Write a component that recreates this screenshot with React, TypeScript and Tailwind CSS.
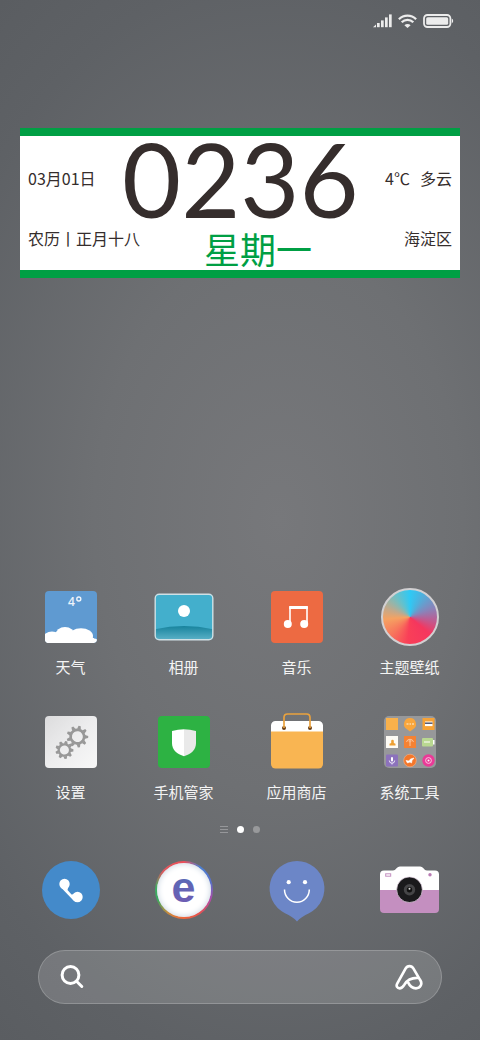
import type { ReactNode } from "react";

type AppItem = {
  name: string;
  icon: ReactNode;
};

/* ---------- status bar ---------- */

function SignalIcon() {
  return (
    <svg width="19" height="14" viewBox="0 0 19 14" fill="#ececec">
      <path d="M0 13.2 3 10.4v2.8z" />
      <rect x="4" y="9" width="2.7" height="4.2" />
      <rect x="8" y="6.4" width="2.7" height="6.8" />
      <rect x="12" y="3.4" width="2.7" height="9.8" />
      <rect x="16" y="0.4" width="2.7" height="12.8" />
    </svg>
  );
}

function WifiIcon() {
  return (
    <svg width="19" height="14" viewBox="0 0 19 14" fill="none" stroke="#ececec" strokeWidth="2.3">
      <path d="M0.9 5.2a12.2 12.2 0 0 1 17.2 0" />
      <path d="M3.7 8.3a8.2 8.2 0 0 1 11.6 0" />
      <path d="M6.4 11.2a4.4 4.4 0 0 1 6.2 0L9.5 14z" fill="#ececec" stroke="none" />
    </svg>
  );
}

function BatteryIcon() {
  return (
    <svg width="31" height="14" viewBox="0 0 31 14">
      <rect x="1" y="1" width="26.4" height="12" rx="3.4" fill="none" stroke="#ececec" strokeWidth="1.8" />
      <rect x="3.2" y="3.2" width="22" height="7.6" rx="1.6" fill="#ececec" />
      <path d="M28.8 4.8c1.8.4 1.8 4 0 4.4z" fill="#ececec" />
    </svg>
  );
}

/* ---------- app icons ---------- */

function WeatherIcon() {
  return (
    <svg width="52" height="52" viewBox="0 0 52 52">
      <defs>
        <clipPath id="weather-clip">
          <rect width="52" height="52" rx="4" />
        </clipPath>
      </defs>
      <g clipPath="url(#weather-clip)">
        <rect width="52" height="52" fill="#5f9ad1" />
        <g fill="#fff">
          <ellipse cx="7" cy="47" rx="9" ry="6.5" />
          <ellipse cx="20" cy="44" rx="9.5" ry="8" />
          <ellipse cx="36" cy="45" rx="12" ry="7.8" />
          <ellipse cx="41" cy="48" rx="7" ry="6" />
          <ellipse cx="49" cy="51" rx="4" ry="3.5" />
          <rect y="47" width="49" height="5" />
        </g>
        <text
          x="23"
          y="14.5"
          fontSize="12"
          fontWeight="500"
          fill="#eef5fc"
          className="font-['Noto_Sans',sans-serif]"
        >
          4
        </text>
        <circle cx="33.8" cy="8" r="2" fill="none" stroke="#eef5fc" strokeWidth="1.4" />
      </g>
    </svg>
  );
}

function GalleryIcon() {
  return (
    <svg width="60" height="48" viewBox="0 0 60 48">
      <defs>
        <linearGradient id="sea" x1="0" y1="0" x2="0" y2="1">
          <stop offset="0" stopColor="#17839d" />
          <stop offset="1" stopColor="#61b5cb" />
        </linearGradient>
        <clipPath id="gallery-clip">
          <rect x="1" y="1" width="58" height="46" rx="4" />
        </clipPath>
      </defs>
      <g clipPath="url(#gallery-clip)">
        <rect width="60" height="48" fill="#43afcc" />
        <path d="M0 36.5Q30 29.5 60 36.5V48H0z" fill="url(#sea)" />
      </g>
      <rect x="1.2" y="1.2" width="57.6" height="45.6" rx="4" fill="none" stroke="#cfe0e5" strokeWidth="1.4" />
      <circle cx="30" cy="18" r="6" fill="#fff" />
    </svg>
  );
}

function MusicIcon() {
  return (
    <svg width="52" height="52" viewBox="0 0 52 52">
      <rect width="52" height="52" rx="4" fill="#ed6a42" />
      <path d="M19 33V16.2h17V33" fill="none" stroke="#fff" strokeWidth="1.6" />
      <rect x="18.2" y="15" width="18.6" height="3" fill="#fff" />
      <circle cx="16.8" cy="33" r="4" fill="#fff" />
      <circle cx="33.2" cy="33" r="4" fill="#fff" />
    </svg>
  );
}

function ThemeIcon() {
  return (
    <div className="size-[58px] rounded-full border-2 border-[#d2d0d2] bg-[conic-gradient(#2fc9f5_0deg,#4fb0dc_30deg,#8b82b8_70deg,#c05a90_100deg,#f5365e_130deg,#f93f58_185deg,#f7745c_225deg,#f5a262_265deg,#c4a98a_290deg,#6fbfc4_325deg,#2fc9f5_360deg)]" />
  );
}

function Gear({ cx, cy, r }: { cx: number; cy: number; r: number }) {
  const teeth = [0, 40, 80, 120, 160, 200, 240, 280, 320];

  return (
    <g transform={`translate(${cx} ${cy}) rotate(12)`}>
      {teeth.map((deg) => (
        <path
          key={deg}
          d={`M-1.9 ${-r * 0.7}L-1.1 ${-r}H1.1L1.9 ${-r * 0.7}z`}
          transform={`rotate(${deg})`}
          fill="#989898"
        />
      ))}
      <circle r={r * 0.63} fill="none" stroke="#989898" strokeWidth={r * 0.25} />
    </g>
  );
}

function SettingsIcon() {
  return (
    <svg width="52" height="52" viewBox="0 0 52 52">
      <defs>
        <linearGradient id="plate" x1="0" y1="0" x2="1" y2="1">
          <stop offset="0" stopColor="#dcdcdd" />
          <stop offset="0.5" stopColor="#ededee" />
          <stop offset="1" stopColor="#f8f8f8" />
        </linearGradient>
      </defs>
      <rect width="52" height="52" rx="4" fill="url(#plate)" />
      <Gear cx={32.4} cy={20.6} r={10.8} />
      <Gear cx={19.4} cy={34} r={9} />
    </svg>
  );
}

function SecurityIcon() {
  return (
    <svg width="52" height="52" viewBox="0 0 52 52">
      <rect width="52" height="52" rx="4" fill="#2db243" />
      <path d="M26 13.2C22 13.4 18 14 14 15V27c0 7.4 5 11 12 13.2z" fill="#fff" />
      <path d="M26 13.2c4 .2 8 .8 12 1.8V27c0 7.4-5 11-12 13.2z" fill="#e9e9e9" />
    </svg>
  );
}

function StoreIcon() {
  return (
    <svg width="52" height="58" viewBox="0 0 52 58">
      <path d="M0 20V12.5a4.5 4.5 0 0 1 4.5-4.5h43a4.5 4.5 0 0 1 4.5 4.5V20z" fill="#fff" />
      <path d="M0 18.5h52V51a4.5 4.5 0 0 1-4.5 4.5h-43A4.5 4.5 0 0 1 0 51z" fill="#f9b552" />
      <circle cx="13" cy="15" r="2" fill="#6b3f16" />
      <circle cx="39" cy="15" r="2" fill="#6b3f16" />
      <path d="M13 15V4.5Q13 1 16.5 1h19Q39 1 39 4.5V15" fill="none" stroke="#e9a23e" strokeWidth="1.7" />
    </svg>
  );
}

function ToolsIcon() {
  return (
    <svg width="52" height="52" viewBox="0 0 52 52">
      <rect width="52" height="52" rx="5" fill="#97989a" />
      <rect x="2" y="2" width="12" height="12" fill="#f9b14b" />
      <path d="M26 2a6 6 0 0 1 3 11.2L26 15.5l-3-2.3A6 6 0 0 1 26 2z" fill="#f9a63c" />
      <path d="M22.5 8h2m1 0h1.5m1 0h2" stroke="#fbd9a6" strokeWidth="1.4" />
      <rect x="38.5" y="2" width="12" height="12" fill="#f6a236" />
      <rect x="41" y="5.5" width="7.5" height="4.6" fill="#fff" />
      <rect x="41" y="6.5" width="7.5" height="1.4" fill="#4b4c63" />

      <rect x="2" y="20" width="12" height="12" fill="#fdfbf5" />
      <path d="M5.5 29.5v-1.7l1.7-.8V25a1.3 1.3 0 0 1 2.6 0v2l1.7.8v1.7z" fill="#eda034" />
      <rect x="20" y="20" width="12" height="12" fill="#f58233" />
      <g fill="none" stroke="#fbc399" strokeWidth="1">
        <path d="M22.5 26a3.6 3.6 0 0 1 7 0" />
        <path d="M26 25.5V30" />
        <circle cx="26" cy="25" r="1" />
      </g>
      <rect x="38" y="22" width="11" height="8.5" rx="1" fill="#b9d891" />
      <path d="M49 24h1.5v4.5H49z" fill="#fff" />
      <rect x="40" y="25" width="6" height="2" fill="#dcebc7" />

      <rect x="2" y="38.5" width="12" height="12" rx="1" fill="#8c72bc" />
      <rect x="7" y="41" width="2" height="4.5" rx="1" fill="#fff" />
      <path d="M5.3 44.5a2.7 2.7 0 0 0 5.4 0M8 47v1.5" fill="none" stroke="#e9e2f6" strokeWidth="1" />
      <circle cx="26" cy="44.5" r="6.3" fill="#f4772b" stroke="#f7b488" strokeWidth="0.6" />
      <path d="M22 44.5l3 .5 1.5-2 3.5-1-2 2.5-.5 2.5-1.5-1-2.5 1z" fill="#fff" stroke="#fff" strokeWidth="0.6" />
      <circle cx="44.5" cy="44.5" r="6.2" fill="#ea3a97" />
      <circle cx="44.5" cy="44.5" r="2.9" fill="none" stroke="#fbd0e6" strokeWidth="0.9" />
      <circle cx="44.5" cy="44.5" r="1" fill="#fff" />
    </svg>
  );
}

/* ---------- dock icons ---------- */

function PhoneIcon() {
  return (
    <svg width="58" height="58" viewBox="0 0 58 58">
      <circle cx="29" cy="29" r="29" fill="#448aca" />
      <circle cx="22.5" cy="23" r="5.2" fill="#fff" />
      <circle cx="35.5" cy="36" r="5.2" fill="#fff" />
      <path d="M19.5 27L30.500 38.500c1.500 1.700 3.500 2.700 5 2.500L34 33l-4.500.5L25.500 29l1-4z" fill="#fff" />
    </svg>
  );
}

function BrowserIcon() {
  return (
    <div className="flex size-[58px] rounded-full bg-[conic-gradient(#e8525f_0deg,#4b7fd0_35deg,#5a6fc8_75deg,#b04ba8_110deg,#e6504f_145deg,#ee6a3a_185deg,#c98a3c_215deg,#3aa860_250deg,#3fae62_275deg,#d95a5f_310deg,#f04e58_360deg)] p-[2px]">
      <div className="flex-1 rounded-full bg-white shadow-[inset_0_0_6px_#c3d0de]">
        <svg viewBox="0 0 54 54">
          <defs>
            <linearGradient id="letter" x1="0" y1="0" x2="0" y2="1">
              <stop offset="0" stopColor="#4f70b8" />
              <stop offset="1" stopColor="#7459b2" />
            </linearGradient>
          </defs>
          <text
            x="26.5"
            y="39"
            textAnchor="middle"
            fontSize="43"
            fontWeight="700"
            fill="url(#letter)"
            className="font-['Liberation_Sans',sans-serif]"
          >
            e
          </text>
        </svg>
      </div>
    </div>
  );
}

function MessageIcon() {
  return (
    <svg width="56" height="58" viewBox="0 0 56 58" className="overflow-visible">
      <path d="M28 0a27.5 27.5 0 0 1 12 52.2C35 54.5 31 57 28 60.5 25 57 21 54.5 16 52.2A27.5 27.5 0 0 1 28 0z" fill="#6c86c7" />
      <circle cx="19.7" cy="21.2" r="2.1" fill="#fff" />
      <circle cx="36" cy="21.2" r="2.1" fill="#fff" />
      <path d="M15.5 28.5a12.4 12.8 0 0 0 24.8 0" fill="none" stroke="#fff" strokeWidth="1.5" />
    </svg>
  );
}

function CameraIcon() {
  return (
    <svg width="59" height="48" viewBox="0 0 59 48">
      <path d="M0 24V8.5a4 4 0 0 1 4-4h9C16 4.5 16.5 .5 20 .5h20c3.5 0 4 4 7 4h8a4 4 0 0 1 4 4V24z" fill="#fff" />
      <path d="M0 24h59v19a4 4 0 0 1-4 4H4a4 4 0 0 1-4-4z" fill="#c48fc0" />
      <rect x="5.7" y="7.8" width="5" height="2.4" fill="none" stroke="#c48fc0" strokeWidth="1" />
      <circle cx="50" cy="8.7" r="1.7" fill="#b97bb4" />
      <circle cx="29.5" cy="23.7" r="12.8" fill="#1a1a1c" stroke="#e4d3e3" strokeWidth="0.7" />
      <circle cx="29.5" cy="23.7" r="5.7" fill="#454547" />
      <circle cx="29.5" cy="23.7" r="2.7" fill="#111" />
      <circle cx="29.5" cy="22.8" r="1" fill="#d8d8d8" />
    </svg>
  );
}

function SearchIcon() {
  return (
    <svg width="24" height="24" viewBox="0 0 24 24" fill="none" stroke="#fff" strokeWidth="3">
      <circle cx="10.5" cy="10" r="8.4" />
      <path d="M16.5 16.2L21.8 21.5" strokeLinecap="round" />
    </svg>
  );
}

function AssistantIcon() {
  return (
    <svg width="28" height="26" viewBox="0 0 84 78" fill="none" stroke="#fff" strokeWidth="8" strokeLinejoin="round">
      <path d="M38 53C44 66 53 73 63 73C76 73 83 60 76 49L55 13C50 4 37 4 32 13L7 58C2 67 7 73 14 73C21 73 24 68 28 62C36 49 48 40 72 42" />
    </svg>
  );
}

const apps: AppItem[] = [
  { name: "天气", icon: <WeatherIcon /> },
  { name: "相册", icon: <GalleryIcon /> },
  { name: "音乐", icon: <MusicIcon /> },
  { name: "主题壁纸", icon: <ThemeIcon /> },
  { name: "设置", icon: <SettingsIcon /> },
  { name: "手机管家", icon: <SecurityIcon /> },
  { name: "应用商店", icon: <StoreIcon /> },
  { name: "系统工具", icon: <ToolsIcon /> },
];

const dock: AppItem[] = [
  { name: "电话", icon: <PhoneIcon /> },
  { name: "浏览器", icon: <BrowserIcon /> },
  { name: "短信", icon: <MessageIcon /> },
  { name: "相机", icon: <CameraIcon /> },
];

function ClockWidget() {
  return (
    <section className="mx-5 mt-[87px] border-y-8 border-[#009f44] bg-white px-2 text-base leading-5 text-[#352d2c]">
      <div className="flex h-[92px] items-start justify-between">
        <span className="pt-8">03月01日</span>
        <time className="font-['Lato',sans-serif] text-[102px] leading-[86px]">0236</time>
        <span className="flex gap-[10px] pt-8">
          <span>4℃</span>
          <span>多云</span>
        </span>
      </div>
      <div className="flex h-[42px] items-start gap-16">
        <span>农历丨正月十八</span>
        <strong className="text-4xl leading-[40px] font-normal text-[#009f44]">星期一</strong>
        <span className="ml-auto">海淀区</span>
      </div>
    </section>
  );
}

export default function App() {
  return (
    <main className="flex min-h-screen flex-col bg-[radial-gradient(110%_75%_at_58%_50%,#77787b_0%,#6e7073_35%,#5e6165_70%,#56595d_100%)] font-['Noto_Sans_CJK_SC',sans-serif]">
      <header className="flex h-[41px] items-center justify-end gap-[6px] pr-[26px]">
        <SignalIcon />
        <WifiIcon />
        <BatteryIcon />
      </header>

      <ClockWidget />

      <div className="mt-auto px-[14px]">
        <div className="grid grid-cols-4 gap-y-[35px]">
          {apps.map((app) => (
            <button key={app.name} className="flex flex-col items-center gap-[10px]">
              <span className="flex h-[60px] items-center justify-center">{app.icon}</span>
              <span className="text-[15px] leading-5 text-[#f4f4f4]">{app.name}</span>
            </button>
          ))}
        </div>

        {/* page indicator */}
        <div className="mt-6 flex h-[7px] items-center justify-center gap-[9px]">
          <svg width="8" height="7" viewBox="0 0 8 7" fill="#96979a">
            <rect width="8" height="1" />
            <rect y="3" width="8" height="1" />
            <rect y="6" width="8" height="1" />
          </svg>
          <span className="size-[7px] rounded-full bg-white" />
          <span className="size-[7px] rounded-full bg-[#98999b]" />
        </div>

        <nav className="mt-7 grid grid-cols-4">
          {dock.map((app) => (
            <button key={app.name} aria-label={app.name} className="flex h-[58px] items-center justify-center">
              {app.icon}
            </button>
          ))}
        </nav>
      </div>

      <form
        className="mx-[38px] mt-[31px] mb-9 flex h-[54px] items-center rounded-full border border-white/20 bg-white/15 pr-[18px] pl-[21px]"
        onSubmit={(e) => e.preventDefault()}
      >
        <button type="submit" aria-label="搜索">
          <SearchIcon />
        </button>
        <input type="text" aria-label="搜索内容" className="h-full min-w-0 flex-1 px-3 text-white outline-none" />
        <button type="button" aria-label="小爱同学">
          <AssistantIcon />
        </button>
      </form>
    </main>
  );
}
